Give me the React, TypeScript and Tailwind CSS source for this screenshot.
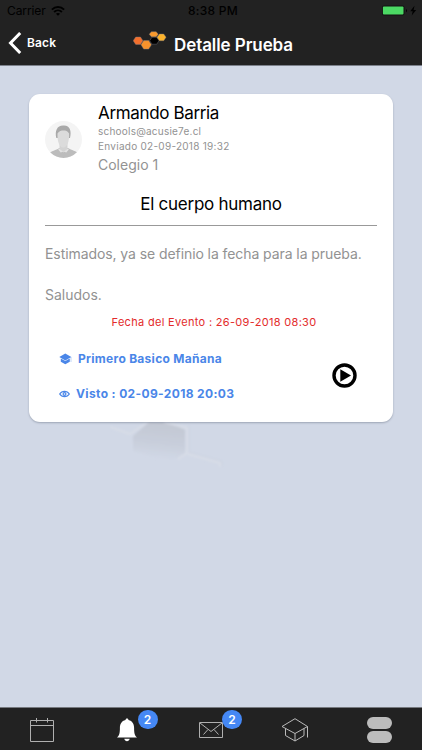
import React from "react";

const HexLogo = () => (
  <svg width="34" height="20" viewBox="0 0 34 20" className="-mt-[4px] shrink-0">
    <g stroke="#80818a" strokeWidth="0.4">
      <path d="M2.700 6h4.800l2.400 3.700-2.400 3.700H2.700L.2 9.700z" fill="#f26f2c" />
      <path d="M10.700 9.600h5l2.700 4.200-2.700 4.300h-5L8 13.800z" fill="#f7922c" />
      <path d="M19 6.200h4.700L26 9.700l-2.300 3.500H19l-2.300-3.500z" fill="#000" />
      <path d="M18.400.7h4.800l2 2.500-2 2.600h-4.800l-2.200-2.600z" fill="#f99a2e" />
      <path d="M26.400 3h4.300l2.400 3.200-2.400 3.500h-4.300L24 6.200z" fill="#fdb32c" />
    </g>
  </svg>
);

const WifiIcon = () => (
  <svg width="14" height="10" viewBox="0 0 14 10" fill="none" stroke="#000" strokeWidth="1.900">
    <path d="M.9 3.600C4.300.2 9.700.2 13.100 3.600M3.100 6c2.200-2.200 5.600-2.200 7.800 0" />
    <path d="M7 9.800 4.900 7.700c1.200-1.100 3-1.100 4.200 0z" fill="#000" stroke="none" />
  </svg>
);

const BatteryIcon = () => (
  <svg width="36" height="12" viewBox="0 0 36 12">
    <rect x="0" y=".5" width="22.500" height="10" rx="2" fill="#111" />
    <rect x=".9" y="1.500" width="20.600" height="8" rx="1" fill="#4cd964" />
    <path d="M24 4c1.300.6 1.300 2.600 0 3.200z" fill="#000" />
    <path d="M32.500.8 28.200 6.300h2.500l-1 4.300 4.500-5.700h-2.600z" fill="#000" />
  </svg>
);

const Avatar = () => (
  <svg width="37" height="37" viewBox="0 0 37 37" className="mt-[27px] shrink-0">
    <defs>
      <clipPath id="avatar">
        <circle cx="18.500" cy="18.500" r="18.500" />
      </clipPath>
    </defs>
    <g clipPath="url(#avatar)">
      <path d="M0 0h37v37H0z" fill="#f4f4f4" />
      <path d="M4 33c2-3.500 7-3.500 10.500-6H23c3.500 2.500 8.500 2.500 10.500 6v5H4z" fill="#bcbcbc" />
      <path d="M14.500 22h8v6l-4 3.500-4-3.500z" fill="#d3d3d3" />
      <path d="M11.300 17C9.700 10 12 4.500 18 4.500c7-.7 8.800 5.500 7 12.500H11.300z" fill="#a9a9a9" />
      <path d="M12.500 12.500c1.500-2.500 4-3 6-3s4.300.5 5.600 3c.4 8-2.100 14-5.800 14s-6.200-6-5.800-14z" fill="#dbdbdb" />
      <path d="m14 27.500 4.500 3.300 4.500-3.300.8 1-2.500 3-2.800-.9-2.800.9-2.500-3z" fill="#e2e2e2" />
    </g>
  </svg>
);

const CapIcon = () => (
  <svg width="13" height="12" viewBox="0 0 13 12" className="shrink-0">
    <path d="M6.300.6 12.300 4 6.300 7.400.3 4z" fill="#4a86e8" />
    <path d="M1.800 5.600 6.300 8.100l4.500-2.500v3.100L6.300 11.200 1.800 8.700z" fill="#4a86e8" />
    <path d="M12 4v5" stroke="#4a86e8" strokeWidth=".6" opacity=".6" />
  </svg>
);

const EyeIcon = () => (
  <svg width="11" height="8" viewBox="0 0 11 8" className="shrink-0">
    <path d="M.7 4c2.300-3.600 7.300-3.600 9.600 0-2.300 3.600-7.300 3.600-9.600 0z" fill="none" stroke="#4a86e8" strokeWidth="1.300" />
    <circle cx="5.500" cy="4" r="1.400" fill="none" stroke="#4a86e8" strokeWidth="1.200" />
  </svg>
);

// faint molecule that shows below the card
const Watermark = () => (
  <svg width="160" height="70" viewBox="0 0 160 70" className="absolute left-[110px] top-[344px]">
    <defs>
      <linearGradient id="hex" x1=".6" y1="0" x2=".45" y2="1">
        <stop offset="0" stopColor="#c3c8d3" />
        <stop offset=".55" stopColor="#c8cedb" />
        <stop offset="1" stopColor="#d1d8e6" />
      </linearGradient>
      <filter id="soft">
        <feGaussianBlur stdDeviation=".8" />
      </filter>
    </defs>
    <g filter="url(#soft)">
      <path d="m23 26 16-14h20l16 8v23l-9 6H50l-27-8z" fill="url(#hex)" />
      <path d="m0 17 20 7 18-12M54 12l23 6v25l-9 6M78 44l32 9v4" fill="none" stroke="#d8dde7" strokeWidth="2" />
      <path d="m79 15v27l33 9v6" fill="none" stroke="#cdd3e1" strokeWidth="1" />
    </g>
  </svg>
);

const Badge = ({ count }: { count: number }) => (
  <span className="flex h-[19px] w-5 items-center justify-center rounded-full bg-[#4588f5] text-[12px] font-semibold text-white">
    {count}
  </span>
);

export default function App() {
  return (
    <main className="flex h-[750px] w-[422px] flex-col overflow-hidden bg-[#d1d8e6] font-['Inter',sans-serif] whitespace-nowrap">
      <header className="h-[66px] border-b border-[#7c818b] bg-[#222]">
        <div className="grid h-[22px] grid-cols-3 items-center text-[12px] text-black">
          <div className="flex items-center gap-[5px] pl-[7px]">
            <span className="tracking-[-0.1px]">Carrier</span>
            <WifiIcon />
          </div>
          <span className="pl-[4px] text-center font-medium tracking-[0.3px]">8:38 PM</span>
          <div className="flex justify-end pr-[4px]">
            <BatteryIcon />
          </div>
        </div>
        <div className="flex h-[42px] items-center pl-[8px] text-white">
          <svg width="14" height="22" viewBox="0 0 14 22" fill="none" stroke="#fff" strokeWidth="3">
            <path d="M12.200 1 2.500 11l9.700 10" />
          </svg>
          <span className="ml-[5px] w-[106px] text-[12px] font-semibold tracking-[0.150px]">Back</span>
          <HexLogo />
          <h1 className="ml-[7px] mt-[5px] text-[17px] font-semibold tracking-[-0.080px]">Detalle Prueba</h1>
        </div>
      </header>

      <section className="relative flex-1 px-[29px] pt-[28px]">
        <Watermark />
        <article className="relative h-[328px] rounded-[11px] bg-white px-4 shadow-[0_1px_2px_rgba(80,90,110,0.4)]">
          <div className="flex gap-4">
            <Avatar />
            <div className="pt-[8px] text-[#929292]">
              <h2 className="-mb-[1px] text-[17px] leading-[23px] tracking-[-0.350px] text-black">Armando Barria</h2>
              <p className="text-[10px] leading-[15px] tracking-[0.220px]">schools@acusie7e.cl</p>
              <p className="text-[10px] leading-[15px] tracking-[0.270px]">Enviado 02-09-2018 19:32</p>
              <p className="text-[14px] leading-[21px]">Colegio 1</p>
            </div>
          </div>
          <h3 className="mt-[17px] text-center text-[17px] leading-[24px] tracking-[-0.260px] text-black">
            El cuerpo humano
          </h3>
          <hr className="mt-[9px] border-[#999]" />
          <p className="mt-[18px] text-[14px] leading-5 tracking-[-0.080px] text-[#929292]">
            Estimados, ya se definio la fecha para la prueba.
          </p>
          <p className="mt-[21px] text-[14px] leading-5 text-[#929292]">Saludos.</p>
          <p className="mt-[9px] pl-[6px] text-center text-[11px] leading-[17px] tracking-[0.310px] text-[#e32b2b]">
            Fecha del Evento : 26-09-2018 08:30
          </p>
          <div className="mt-[18px] flex items-start justify-between pr-[20px] pl-[14px] text-[12px] font-bold text-[#4a86e8]">
            <div>
              <div className="flex h-5 items-center gap-1.5">
                <CapIcon />
                <span className="tracking-[0.280px]">Primero Basico Mañana</span>
              </div>
              <div className="mt-[15px] flex h-5 items-center gap-1.5">
                <EyeIcon />
                <span className="tracking-[0.360px]">Visto : 02-09-2018 20:03</span>
              </div>
            </div>
            <svg width="25" height="25" viewBox="0 0 25 25" className="mt-[14px]">
              <circle cx="12.500" cy="12.500" r="10.500" fill="none" stroke="#000" strokeWidth="3.400" />
              <path d="M8.300 6.300v12.400l10.700-6.200z" fill="#000" />
            </svg>
          </div>
        </article>
      </section>

      <nav className="grid h-[43px] grid-cols-5 border-t border-[#76797f] bg-[#222]">
        <div className="flex items-center justify-center pt-[2px]">
          <svg width="24" height="24" viewBox="0 0 24 24" fill="none" stroke="#b0b0b0" strokeWidth="1">
            <path d="M.5 2.500h23v21H.5zM.5 7.500h23M6.500 0v4.500M17.500 0v4.500" />
          </svg>
        </div>
        <div className="flex items-center justify-center pt-[2px]">
          <div className="relative">
            <svg width="20" height="24" viewBox="0 0 20 24" fill="#fff">
              <path d="M10 .5c1 0 1.400.6 1.500 1.500 4 1 5.600 4 5.600 8 0 5 .6 7.500 2.900 9.500H0c2.300-2 2.900-4.500 2.900-9.500 0-4 1.600-7 5.600-8 .1-.9.500-1.500 1.500-1.500zM7.300 20.800h5.400c-.4 3.200-5 3.200-5.400 0z" />
            </svg>
            <div className="absolute left-[21px] -top-[8px]">
              <Badge count={2} />
            </div>
          </div>
        </div>
        <div className="flex items-center justify-center pt-[2px]">
          <div className="relative">
            <svg width="24" height="16" viewBox="0 0 24 16" fill="none" stroke="#b0b0b0">
              <path d="M.5.500h23v15H.5zM1 1l11 8.500L23 1M4.500 12.500l4.500-5M19.500 12.500l-4.500-5" />
            </svg>
            <div className="absolute left-[23px] -top-[12px]">
              <Badge count={2} />
            </div>
          </div>
        </div>
        <div className="flex items-center justify-center pt-[2px]">
          <svg width="28" height="24" viewBox="0 0 28 24" fill="none" stroke="#bbb" strokeWidth="1">
            <path d="M1 8.500 14 .700l12.500 7.800L14 15.500zM4.500 10.500v7L14 23l9-5.500v-7M14 15.500V23M26.500 8.500v11" />
          </svg>
        </div>
        <div className="flex flex-col items-center justify-center gap-[2px] pt-[2px]">
          <span className="h-3 w-[25px] rounded-[6px] bg-[#bcbcbc]" />
          <span className="h-3 w-[25px] rounded-[6px] bg-[#bcbcbc]" />
        </div>
      </nav>
    </main>
  );
}
